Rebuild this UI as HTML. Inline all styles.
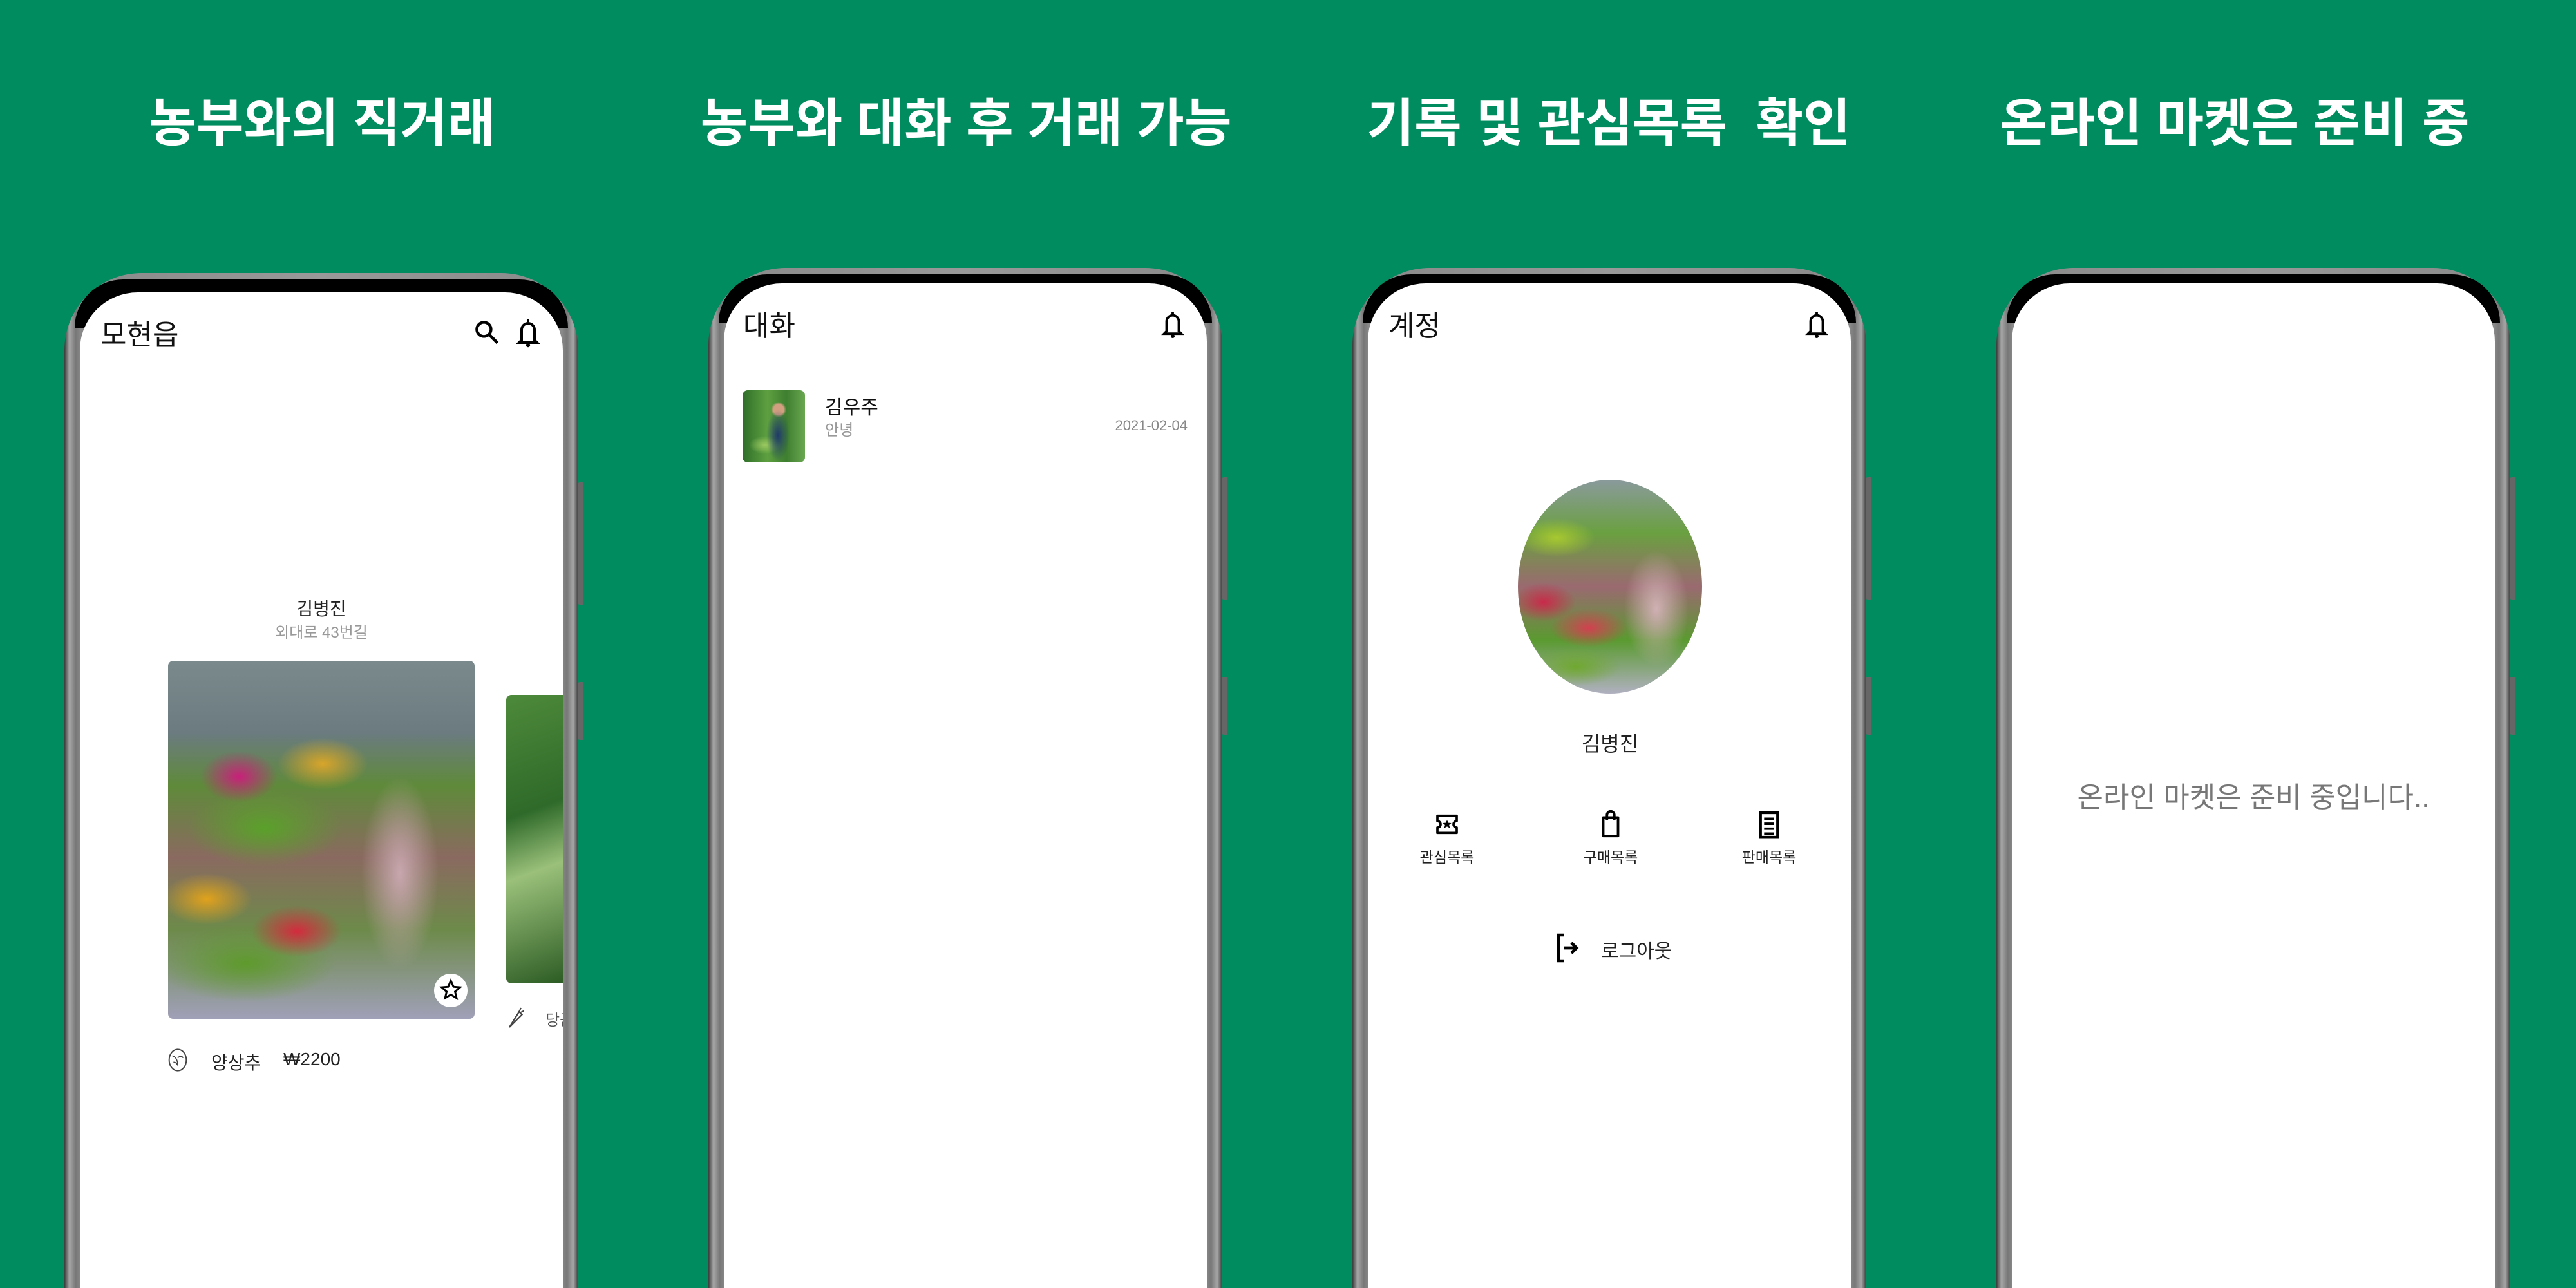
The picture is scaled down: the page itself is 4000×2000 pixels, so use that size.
<!DOCTYPE html>
<html><head><meta charset="utf-8">
<style>
*{margin:0;padding:0;box-sizing:border-box}
html{width:4000px;height:2000px;overflow:hidden}
body{width:4000px;height:2000px;overflow:hidden;background:#018c5f;position:relative;font-family:"Liberation Sans","Noto Sans CJK KR",sans-serif}
.h{position:absolute;top:142px;width:1000px;text-align:center;color:#fff;font-weight:bold;font-size:80px;line-height:100px;font-family:"Liberation Sans","Noto Sans CJK KR",sans-serif}
.ph{position:absolute;top:420px;width:798px;height:1600px;border-radius:120px 120px 0 0;background:linear-gradient(90deg,#3a3a3a,#a8a8a8 1%,#777 2.2%,#8a8a8a 3.2%,#999 50%,#8a8a8a 96.8%,#777 97.8%,#a8a8a8 99%,#3a3a3a)}
.ph .bk{position:absolute;left:16px;right:16px;top:10px;height:75px;border-radius:108px 108px 0 0;background:#000}
.ph .btn{position:absolute;right:-8px;width:8px;background:#666;border-radius:2px}
.sc{position:absolute;top:450px;width:750px;height:1600px;background:#fff;border-radius:90px 90px 0 0;overflow:hidden}
.a{position:absolute;white-space:nowrap}
.t{font-size:44px;color:#111}
</style></head><body>

<div class="h" style="left:0">농부와의 직거래</div>
<div class="h" style="left:1000px">농부와 대화 후 거래 가능</div>
<div class="h" style="left:1998px">기록 및 관심목록&nbsp; 확인</div>
<div class="h" style="left:2970px">온라인 마켓은 준비 중</div>

<div class="ph" style="left:100px;top:424px"><div class="bk"></div><div class="btn" style="top:325px;height:190px"></div><div class="btn" style="top:635px;height:90px"></div></div>
<div class="ph" style="left:1100px;top:416px"><div class="bk"></div><div class="btn" style="top:325px;height:190px"></div><div class="btn" style="top:635px;height:90px"></div></div>
<div class="ph" style="left:2100px;top:416px"><div class="bk"></div><div class="btn" style="top:325px;height:190px"></div><div class="btn" style="top:635px;height:90px"></div></div>
<div class="ph" style="left:3100px;top:416px"><div class="bk"></div><div class="btn" style="top:325px;height:190px"></div><div class="btn" style="top:635px;height:90px"></div></div>

<!-- screen 1 -->
<div class="sc" style="left:124px;top:454px">
  <div class="a t" style="left:32px;top:30px">모현읍</div>
  <svg class="a" style="left:610px;top:40px" width="44" height="44" viewBox="0 0 24 24"><circle cx="9.5" cy="9.5" r="6" fill="none" stroke="#000" stroke-width="2.4"/><path d="M14 14l7 7" stroke="#000" stroke-width="2.6"/></svg>
  <svg class="a" style="left:676px;top:38px" width="40" height="48" viewBox="0 0 20 24"><path d="M10 2v2M5 18V10a5 5 0 0 1 10 0v8l2 2H3z" fill="none" stroke="#000" stroke-width="2"/><circle cx="10" cy="22" r="1.6"/></svg>
  <div class="a" style="left:0;width:750px;text-align:center;top:470px;font-size:28px;color:#222">김병진</div>
  <div class="a" style="left:0;width:750px;text-align:center;top:508px;font-size:24px;color:#999">외대로 43번길</div>
  <div class="a" style="left:137px;top:572px;width:476px;height:556px;border-radius:8px;overflow:hidden;background:
   radial-gradient(ellipse 60px 150px at 360px 330px,#c8a6ae,transparent),
   radial-gradient(ellipse 70px 40px at 60px 370px,#e0a21c,transparent),
   radial-gradient(ellipse 70px 40px at 200px 420px,#d32b3d,transparent),
   radial-gradient(ellipse 60px 40px at 110px 180px,#c8207a,transparent),
   radial-gradient(ellipse 70px 40px at 240px 160px,#d8a52a,transparent),
   radial-gradient(ellipse 120px 60px at 150px 260px,#5aa12a,transparent),
   radial-gradient(ellipse 140px 60px at 120px 470px,#5e9a2c,transparent),
   linear-gradient(180deg,#7a8a8c 0%,#6b7b80 20%,#5f8a3a 35%,#8a6a60 55%,#6d8a4a 75%,#a0a0b8 100%)"></div>
  <div class="a" style="left:550px;top:1058px;width:52px;height:52px;border-radius:50%;background:#fff"></div>
  <svg class="a" style="left:558px;top:1065px" width="36" height="36" viewBox="0 0 24 24"><path d="M12 2.5l2.8 6.3 6.8.6-5.2 4.5 1.6 6.7L12 17l-5.9 3.6 1.6-6.7L2.5 9.4l6.8-.6z" fill="none" stroke="#000" stroke-width="2"/></svg>
  <div class="a" style="left:662px;top:625px;width:100px;height:448px;border-radius:8px;background:linear-gradient(160deg,#4e8a3a,#2f6a2a 40%,#9ac07a 60%,#2a5a22)"></div>
  <svg class="a" style="left:660px;top:1108px" width="32" height="36" viewBox="0 0 20 24"><path d="M4 22L14 6l3 3z" fill="none" stroke="#444" stroke-width="1.5"/><path d="M14 6l2-4M15 7l4-2" stroke="#444" stroke-width="1.3"/></svg>
  <div class="a" style="left:723px;top:1110px;font-size:24px;color:#555">당근</div>
  <svg class="a" style="left:135px;top:1172px" width="34" height="40" viewBox="0 0 20 24"><ellipse cx="10" cy="12" rx="8" ry="10" fill="none" stroke="#444" stroke-width="1.2"/><path d="M5 8c3 1 5 4 5 9M10 10c2-2 4-2 5 0M6 14c2 0 3 1 4 3" fill="none" stroke="#444" stroke-width="1"/></svg>
  <div class="a" style="left:204px;top:1175px;font-size:28px;color:#222">양상추</div>
  <div class="a" style="left:316px;top:1175px;font-size:28px;color:#222">₩2200</div>
</div>

<!-- screen 2 -->
<div class="sc" style="left:1124px;top:440px">
  <div class="a t" style="left:30px;top:30px">대화</div>
  <svg class="a" style="left:678px;top:40px" width="38" height="46" viewBox="0 0 20 24"><path d="M10 2v2M5 18V10a5 5 0 0 1 10 0v8l2 2H3z" fill="none" stroke="#000" stroke-width="2"/><circle cx="10" cy="22" r="1.6"/></svg>
  <div class="a" style="left:29px;top:166px;width:97px;height:112px;border-radius:8px;background:
   radial-gradient(ellipse 18px 40px at 55px 70px,#1f3a6a,transparent),
   radial-gradient(circle at 56px 30px,#d2a080 8px,transparent 12px),
   radial-gradient(ellipse 25px 14px at 35px 85px,#9ac860,transparent),
   linear-gradient(90deg,#2e6e2a,#5ea040 40%,#3e7e30 70%,#6aa850)"></div>
  <div class="a" style="left:157px;top:168px;font-size:30px;color:#111">김우주</div>
  <div class="a" style="left:157px;top:208px;font-size:24px;color:#999">안녕</div>
  <div class="a" style="right:30px;top:208px;font-size:22px;color:#888">2021-02-04</div>
</div>

<!-- screen 3 -->
<div class="sc" style="left:2124px;top:440px">
  <div class="a t" style="left:32px;top:30px">계정</div>
  <svg class="a" style="left:678px;top:40px" width="38" height="46" viewBox="0 0 20 24"><path d="M10 2v2M5 18V10a5 5 0 0 1 10 0v8l2 2H3z" fill="none" stroke="#000" stroke-width="2"/><circle cx="10" cy="22" r="1.6"/></svg>
  <div class="a" style="left:233px;top:305px;width:286px;height:332px;border-radius:50%;background:
   radial-gradient(ellipse 50px 90px at 215px 200px,#d0b0b4,transparent),
   radial-gradient(ellipse 50px 30px at 40px 190px,#c92a4a,transparent),
   radial-gradient(ellipse 60px 30px at 60px 90px,#a8c830,transparent),
   radial-gradient(ellipse 60px 30px at 110px 230px,#d24050,transparent),
   radial-gradient(ellipse 70px 30px at 90px 290px,#70a830,transparent),
   linear-gradient(180deg,#8a9a9c,#6aa040 25%,#9a6a70 50%,#5a9a30 75%,#b0b0c0)"></div>
  <div class="a" style="left:0;width:752px;text-align:center;top:690px;font-size:32px;color:#222">김병진</div>
  <svg class="a" style="left:103px;top:820px" width="40" height="40" viewBox="0 0 24 24"><path d="M3 4h18v5a3 3 0 0 0 0 6v5H3v-5a3 3 0 0 0 0-6z" fill="none" stroke="#000" stroke-width="2.2" stroke-linejoin="round"/><path d="M12 8l1.2 2.6 2.8.2-2.1 1.8.7 2.8L12 14l-2.6 1.4.7-2.8L8 10.8l2.8-.2z"/></svg>
  <div class="a" style="left:63px;top:872px;width:120px;text-align:center;font-size:23px;color:#222">관심목록</div>
  <svg class="a" style="left:357px;top:816px" width="40" height="46" viewBox="0 0 20 24"><path d="M4 7h12v15H4z" fill="none" stroke="#000" stroke-width="2" stroke-linejoin="round"/><path d="M7 9V5a3 3 0 0 1 6 0v4" fill="none" stroke="#000" stroke-width="2"/></svg>
  <div class="a" style="left:317px;top:872px;width:120px;text-align:center;font-size:23px;color:#222">구매목록</div>
  <svg class="a" style="left:603px;top:818px" width="40" height="46" viewBox="0 0 20 24"><path d="M3 2h14v20H3z" fill="none" stroke="#000" stroke-width="2.4"/><path d="M6 7h8M6 11h8M6 15h8M6 19h8" stroke="#000" stroke-width="2"/></svg>
  <div class="a" style="left:563px;top:872px;width:120px;text-align:center;font-size:23px;color:#222">판매목록</div>
  <svg class="a" style="left:290px;top:1008px" width="40" height="48" viewBox="0 0 20 24"><path d="M7 2H3v20h4" fill="none" stroke="#000" stroke-width="2.2"/><path d="M7 12h9M13 8l4 4-4 4" fill="none" stroke="#000" stroke-width="2.4"/></svg>
  <div class="a" style="left:362px;top:1012px;font-size:30px;color:#222">로그아웃</div>
</div>

<!-- screen 4 -->
<div class="sc" style="left:3124px;top:440px">
  <div class="a" style="left:0;width:750px;text-align:center;top:762px;font-size:44px;color:#777">온라인 마켓은 준비 중입니다..</div>
</div>

</body></html>
